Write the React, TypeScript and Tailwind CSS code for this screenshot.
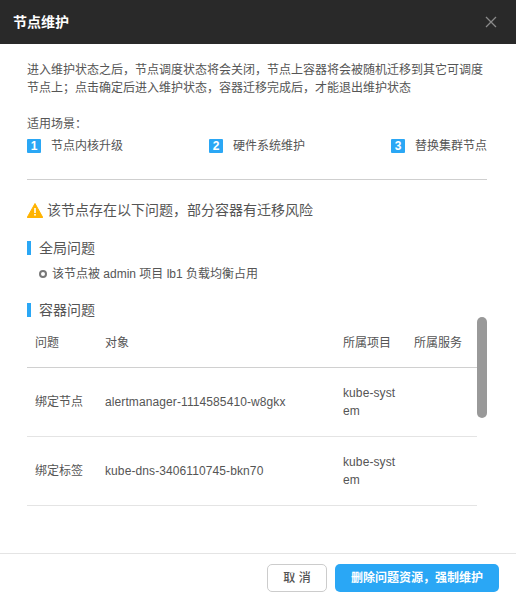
const scenes = ["节点内核升级", "硬件系统维护", "替换集群节点"];

const intro =
  "进入维护状态之后\uFF0C节点调度状态将会关闭\uFF0C节点上容器将会被随机迁移到其它可调度节点上\uFF1B点击确定后进入维护状态\uFF0C容器迁移完成后\uFF0C才能退出维护状态";

const rows = [
  { issue: "绑定节点", target: "alertmanager-1114585410-w8gkx", project: "kube-system" },
  { issue: "绑定标签", target: "kube-dns-3406110745-bkn70", project: "kube-system" },
];

const SectionTitle = ({ title }: { title: string }) => (
  <div className="flex items-center h-[20px] text-[14px] text-[#555]">
    <span className="w-[4px] h-[14px] bg-[#2aa7f5] mr-[8px]" />
    {title}
  </div>
);

const App = () => {
  return (
    <div
      className="w-[516px] h-[600px] bg-white flex flex-col overflow-hidden text-[12px] text-[#555]"
      style={{ fontFamily: '"Liberation Sans", "Noto Sans CJK SC", sans-serif' }}
    >
      {/* Header */}
      <div className="h-[44px] shrink-0 bg-[#292929] flex items-center justify-between pl-[13px] pr-[19px]">
        <h1 className="text-[14px] font-bold text-white">节点维护</h1>
        <svg width="12" height="12" viewBox="0 0 12 12" className="mb-[1px]" fill="none" stroke="#8a8a8a" strokeWidth="1.3">
          <path d="M1 1 L11 11 M11 1 L1 11" />
        </svg>
      </div>

      {/* Body */}
      <div className="flex-1 pl-[27px] pr-[29px] pt-[17px]">
        <p className="leading-[18px]">{intro}</p>

        <div className="mt-[18px] leading-[18px]">{"适用场景\uFF1A"}</div>
        <div className="mt-[4px] flex justify-between">
          {scenes.map((scene, i) => (
            <div key={scene} className="flex items-center h-[18px]">
              <span className="w-[14px] h-[14px] rounded-[1px] bg-[#2aa7f5] text-white font-bold text-[12px] flex items-center justify-center mr-[10px]">
                {i + 1}
              </span>
              {scene}
            </div>
          ))}
        </div>
        <div className="mt-[24px] border-t border-[#cfcfcf]" />

        <div className="mt-[20px] flex items-center h-[20px] text-[14px]">
          <svg width="16" height="15" viewBox="0 0 16 15" className="mr-[4px]">
            <path d="M8 0.5 L15.8 14.5 H0.2 Z" fill="#ffb300" stroke="#ffb300" strokeLinejoin="round" />
            <rect x="7.2" y="5" width="1.6" height="5" fill="#fff" />
            <rect x="7.2" y="11" width="1.6" height="1.6" fill="#fff" />
          </svg>
          {"该节点存在以下问题\uFF0C部分容器有迁移风险"}
        </div>

        <div className="mt-[18px]">
          <SectionTitle title="全局问题" />
        </div>
        <div className="mt-[7px] flex items-center h-[18px] pl-[12px]">
          <span className="w-[8px] h-[8px] rounded-full border-2 border-[#777] mr-[5px]" />
          该节点被 admin 项目 lb1 负载均衡占用
        </div>

        <div className="mt-[17px]">
          <SectionTitle title="容器问题" />
        </div>

        {/* Table */}
        <div className="relative">
          <div className="w-[450px]">
            <div className="grid grid-cols-[70px_238px_71px_71px] h-[48px] items-center border-b border-[#d0d0d0] pb-[2px]">
              <div className="pl-[8px]">问题</div>
              <div className="pl-[8px]">对象</div>
              <div className="pl-[8px]">所属项目</div>
              <div className="pl-[8px]">所属服务</div>
            </div>
            {rows.map((row) => (
              <div
                key={row.target}
                className="grid grid-cols-[70px_238px_71px_71px] h-[69px] items-center border-b border-[#e4e4e4]"
              >
                <div className="pl-[8px]">{row.issue}</div>
                <div className="pl-[8px] tracking-[0.1px]">{row.target}</div>
                <div className="pl-[8px] pr-[8px] leading-[18px] break-all tracking-[0.1px]">{row.project}</div>
                <div />
              </div>
            ))}
          </div>
          <div className="absolute right-0 top-[-3px] w-[10px] h-[101px] rounded-[5px] bg-[#999]" />
        </div>
      </div>

      {/* Footer */}
      <div className="h-[47px] shrink-0 border-t border-[#e4e4e4] flex items-start justify-end gap-[8px] pt-[10px] pr-[17px]">
        <button className="w-[60px] h-[28px] rounded-[5px] border border-[#ccc] bg-white text-[#555] font-medium">
          取 消
        </button>
        <button className="w-[164px] h-[28px] rounded-[5px] bg-[#2aa7f5] text-white font-bold">
          {"删除问题资源\uFF0C强制维护"}
        </button>
      </div>
    </div>
  );
};

export default App;
